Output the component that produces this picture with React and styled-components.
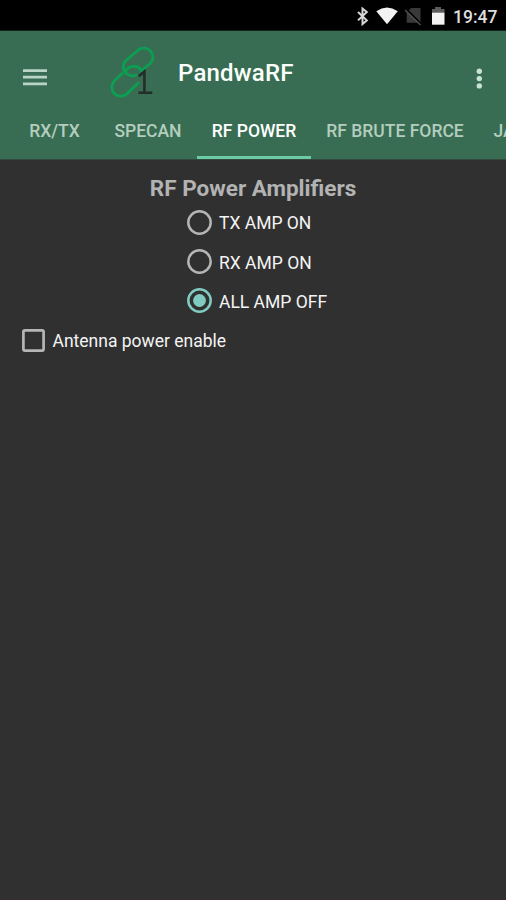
import React, {useState} from 'react'
import styled, {createGlobalStyle} from "styled-components";

const GlobalStyle = createGlobalStyle`
  * {
    box-sizing: border-box;
  }
  body {
    margin: 0;
    background-color: #303030;
    font-family: Roboto, "Liberation Sans", sans-serif;
  }
`;

const Screen = styled('div')`
  display: flex;
  flex-direction: column;
  width: 506px;
  height: 900px;
  overflow: hidden;
  background-color: #303030;
  border-bottom: 1px solid #3a2a31;
`;
const StatusBar = styled('div')`
  display: flex;
  justify-content: flex-end;
  height: 31px;
  padding: 0 9px 0 0;
  background-color: #000;
  border-bottom: 1px solid #13241c;
`;
const StatusIcons = styled('svg')`
  display: block;
  width: 98px;
  height: 30px;
`;
const Clock = styled('div')`
  width: 44px;
  font-size: 17.5px;
  font-weight: 500;
  line-height: 34px;
  color: #dedede;
  white-space: nowrap;
`;
const AppBar = styled('header')`
  display: flex;
  flex-direction: column;
  flex-shrink: 0;
  height: 129px;
  background-color: #386d53;
  border-bottom: 1px solid #33483e;
`;
const Toolbar = styled('div')`
  display: flex;
  align-items: flex-start;
  height: 72px;
  padding-left: 23px;
`;
const MenuButton = styled('button')`
  width: 24px;
  height: 18px;
  margin: 37px 0 0;
  padding: 0;
  border: none;
  background: none;
  cursor: pointer;
`;
const ToolbarIcon = styled('svg')`
  display: block;
`;
const Logo = styled('svg')`
  display: block;
  margin: 11px 0 0 59px;
`;
const Title = styled('h1')`
  flex-grow: 1;
  margin: 27px 0 0 18px;
  font-size: 24px;
  font-weight: 500;
  line-height: 30px;
  letter-spacing: 0.2px;
  color: #fbfffc;
`;
const MoreButton = styled(MenuButton)`
  width: 8px;
  height: 22px;
  margin: 36px 23px 0 0;
`;
const TabList = styled('nav')`
  display: flex;
  height: 56px;
  padding-left: 10px;
  overflow: hidden;
`;
const Tab = styled('button')`
  flex: 0 0 ${props => props.$width}px;
  padding: 4px 0 1px;
  border: none;
  border-bottom: 3px solid ${props => props.$active ? '#6bcba2' : 'transparent'};
  background: none;
  font-family: inherit;
  font-size: 17.5px;
  font-weight: 500;
  line-height: 20px;
  color: ${props => props.$active ? '#fff' : '#b4cdbf'};
  white-space: nowrap;
  cursor: pointer;
`;
const Content = styled('main')`
  display: flex;
  flex-direction: column;
  padding-top: 14px;
`;
const Heading = styled('h2')`
  margin: 0;
  font-size: 22.5px;
  font-weight: 700;
  line-height: 28px;
  text-align: center;
  color: #b3b3b3;
`;
const RadioList = styled('div')`
  display: flex;
  flex-direction: column;
  margin-top: 0.6px;
  padding-left: 187px;
`;
const OptionRow = styled('label')`
  display: flex;
  align-items: center;
  height: 39.3px;
  font-size: 17.5px;
  color: #f4f4f4;
  cursor: pointer;
`;
const CheckRow = styled(OptionRow)`
  padding-left: 21.5px;
`;
const OptionText = styled('span')`
  margin: 2px 0 0 ${props => props.$gap}px;
`;
const HiddenInput = styled('input')`
  position: absolute;
  opacity: 0;
  pointer-events: none;
`;
const Mark = styled('svg')`
  display: block;
  flex-shrink: 0;
`;

const TABS = [
    {title: 'RX/TX', width: 89},
    {title: 'SPECAN', width: 98},
    {title: 'RF POWER', width: 114},
    {title: 'RF BRUTE FORCE', width: 168},
    {title: 'JAMMING', width: 110},
];
const AMPLIFIERS = ['TX AMP ON', 'RX AMP ON', 'ALL AMP OFF'];

const RadioMark = ({checked}) => (
    <Mark width="25" height="25" viewBox="0 0 25 25">
        <circle cx="12.5" cy="12.5" r="11.2" fill="none" stroke={checked ? '#80cbbf' : '#b5b5b5'} strokeWidth="2.5"/>
        {checked ? <circle cx="12.5" cy="12.5" r="6.4" fill="#80cbbf"/> : null}
    </Mark>
)

const CheckMark = ({checked}) => (
    <Mark width="23" height="23" viewBox="0 0 23 23">
        <rect x="1.4" y="1.4" width="20.2" height="20.2" rx="1.5"
              fill={checked ? '#80cbbf' : 'none'}
              stroke={checked ? '#80cbbf' : '#b5b5b5'}
              strokeWidth="2.7"
        />
        {checked ? <path d="M5 12l4.5 4.5L18.5 7" fill="none" stroke="#303030" strokeWidth="2.7"/> : null}
    </Mark>
)

const StatusBarComponent = () => (
    <StatusBar>
        <StatusIcons viewBox="355 0 98 30">
            {/* bluetooth */}
            <path d="M358 12l8.8 8.4-4.3 3.7V8.5l4.3 3.5-8.8 8.4" fill="none" stroke="#d6d6d6" strokeWidth="2"/>
            {/* wifi */}
            <path d="M376.3 11.2q10.7-7.2 21.5 0L387 24.2z" fill="#f2f2f2"/>
            {/* no sim */}
            <path d="M411 8h9.5v14.8h-13.8V12.2z" fill="#393939"/>
            <path d="M405.5 8.8l15.5 15.6" stroke="#000" strokeWidth="2.6"/>
            <path d="M405 10l15.5 15" stroke="#555" strokeWidth="1.3"/>
            {/* battery */}
            <path d="M432 9h3V7h6v2h3.5v4H432z" fill="#5b5b5b"/>
            <path d="M432 12.7h12.5v12H432z" fill="#f2f2f2"/>
        </StatusIcons>
        <Clock>19:47</Clock>
    </StatusBar>
)

const App = () => {
    const [activeTab, setActiveTab] = useState('RF POWER');
    const [amplifier, setAmplifier] = useState('ALL AMP OFF');
    const [antenna, setAntenna] = useState(false);

    return (
        <>
            <GlobalStyle/>
            <Screen>
                <StatusBarComponent/>
                <AppBar>
                    <Toolbar>
                        <MenuButton aria-label="Menu">
                            <ToolbarIcon width="24" height="18" viewBox="0 0 24 18">
                                <path d="M0 2.6h24M0 9.2h24M0 15.8h24" stroke="#b9d3c4" strokeWidth="2.8"/>
                            </ToolbarIcon>
                        </MenuButton>
                        <Logo width="54" height="60" viewBox="106 42 54 60">
                            <g fill="none" stroke="#0c9f52" strokeWidth="2.8">
                                <path d="M137.3 74.3A9 9 0 0 1 125.7 60.7L138.8 49.6A9 9 0 0 1 150.4 63.2L140.5 71.6"/>
                                <path d="M123.2 72.6L114.2 81.1A9 9 0 0 0 126.6 94.1L139 82.2"/>
                                <path d="M125.4 71.6C128.6 65.6 138.2 63.6 141.4 71.2"/>
                            </g>
                            <path d="M138.8 76.2l5.6-4.6v21M138.5 92.7h13.8" fill="none" stroke="#252d29" strokeWidth="2.6"/>
                        </Logo>
                        <Title>PandwaRF</Title>
                        <MoreButton aria-label="More">
                            <ToolbarIcon width="8" height="22" viewBox="0 0 8 22">
                                <g fill="#c9e2d4">
                                    <circle cx="4.3" cy="4.2" r="2.7"/>
                                    <circle cx="4.3" cy="11.6" r="2.7"/>
                                    <circle cx="4.3" cy="18.9" r="2.7"/>
                                </g>
                            </ToolbarIcon>
                        </MoreButton>
                    </Toolbar>
                    <TabList>
                        {
                            TABS.map(tab => (
                                <Tab key={tab.title}
                                     $width={tab.width}
                                     $active={activeTab === tab.title}
                                     onClick={() => setActiveTab(tab.title)}
                                >
                                    {tab.title}
                                </Tab>
                            ))
                        }
                    </TabList>
                </AppBar>
                <Content>
                    <Heading>RF Power Amplifiers</Heading>
                    <RadioList>
                        {
                            AMPLIFIERS.map(item => (
                                <OptionRow key={item}>
                                    <HiddenInput type="radio"
                                                 name="amplifier"
                                                 checked={amplifier === item}
                                                 onChange={() => setAmplifier(item)}
                                    />
                                    <RadioMark checked={amplifier === item}/>
                                    <OptionText $gap={7}>{item}</OptionText>
                                </OptionRow>
                            ))
                        }
                    </RadioList>
                    <CheckRow>
                        <HiddenInput type="checkbox"
                                     checked={antenna}
                                     onChange={() => setAntenna(!antenna)}
                        />
                        <CheckMark checked={antenna}/>
                        <OptionText $gap={8}>Antenna power enable</OptionText>
                    </CheckRow>
                </Content>
            </Screen>
        </>
    )
}
export default App
